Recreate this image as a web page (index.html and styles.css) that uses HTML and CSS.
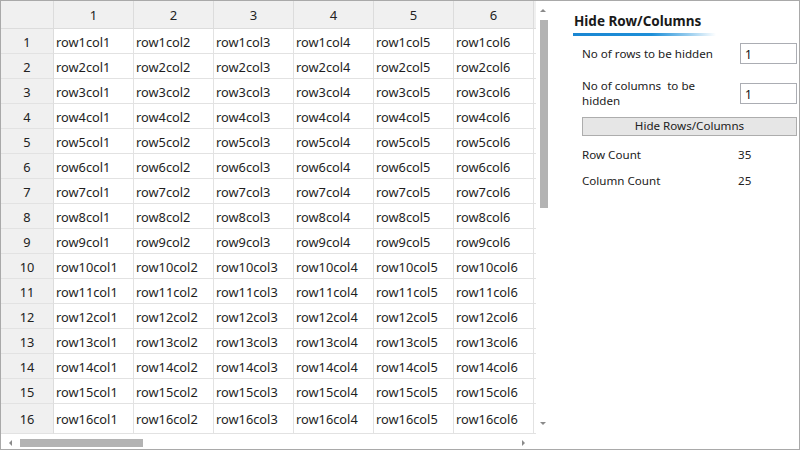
FILE: index.html
```html
<!DOCTYPE html>
<html>
<head>
<meta charset="utf-8">
<link rel="stylesheet" href="styles.css">
</head>
<body>
<div class="window">
  <div class="gridarea">
    <div class="gridmain">
      <div class="grid">
        <div class="hd corner"></div>
        <div class="hd">1</div><div class="hd">2</div><div class="hd">3</div><div class="hd">4</div><div class="hd">5</div><div class="hd">6</div><div class="hd"></div>
        <div class="rh">1</div><div class="c">row1col1</div><div class="c">row1col2</div><div class="c">row1col3</div><div class="c">row1col4</div><div class="c">row1col5</div><div class="c">row1col6</div><div class="c"></div>
        <div class="rh">2</div><div class="c">row2col1</div><div class="c">row2col2</div><div class="c">row2col3</div><div class="c">row2col4</div><div class="c">row2col5</div><div class="c">row2col6</div><div class="c"></div>
        <div class="rh">3</div><div class="c">row3col1</div><div class="c">row3col2</div><div class="c">row3col3</div><div class="c">row3col4</div><div class="c">row3col5</div><div class="c">row3col6</div><div class="c"></div>
        <div class="rh">4</div><div class="c">row4col1</div><div class="c">row4col2</div><div class="c">row4col3</div><div class="c">row4col4</div><div class="c">row4col5</div><div class="c">row4col6</div><div class="c"></div>
        <div class="rh">5</div><div class="c">row5col1</div><div class="c">row5col2</div><div class="c">row5col3</div><div class="c">row5col4</div><div class="c">row5col5</div><div class="c">row5col6</div><div class="c"></div>
        <div class="rh">6</div><div class="c">row6col1</div><div class="c">row6col2</div><div class="c">row6col3</div><div class="c">row6col4</div><div class="c">row6col5</div><div class="c">row6col6</div><div class="c"></div>
        <div class="rh">7</div><div class="c">row7col1</div><div class="c">row7col2</div><div class="c">row7col3</div><div class="c">row7col4</div><div class="c">row7col5</div><div class="c">row7col6</div><div class="c"></div>
        <div class="rh">8</div><div class="c">row8col1</div><div class="c">row8col2</div><div class="c">row8col3</div><div class="c">row8col4</div><div class="c">row8col5</div><div class="c">row8col6</div><div class="c"></div>
        <div class="rh">9</div><div class="c">row9col1</div><div class="c">row9col2</div><div class="c">row9col3</div><div class="c">row9col4</div><div class="c">row9col5</div><div class="c">row9col6</div><div class="c"></div>
        <div class="rh">10</div><div class="c">row10col1</div><div class="c">row10col2</div><div class="c">row10col3</div><div class="c">row10col4</div><div class="c">row10col5</div><div class="c">row10col6</div><div class="c"></div>
        <div class="rh">11</div><div class="c">row11col1</div><div class="c">row11col2</div><div class="c">row11col3</div><div class="c">row11col4</div><div class="c">row11col5</div><div class="c">row11col6</div><div class="c"></div>
        <div class="rh">12</div><div class="c">row12col1</div><div class="c">row12col2</div><div class="c">row12col3</div><div class="c">row12col4</div><div class="c">row12col5</div><div class="c">row12col6</div><div class="c"></div>
        <div class="rh">13</div><div class="c">row13col1</div><div class="c">row13col2</div><div class="c">row13col3</div><div class="c">row13col4</div><div class="c">row13col5</div><div class="c">row13col6</div><div class="c"></div>
        <div class="rh">14</div><div class="c">row14col1</div><div class="c">row14col2</div><div class="c">row14col3</div><div class="c">row14col4</div><div class="c">row14col5</div><div class="c">row14col6</div><div class="c"></div>
        <div class="rh">15</div><div class="c">row15col1</div><div class="c">row15col2</div><div class="c">row15col3</div><div class="c">row15col4</div><div class="c">row15col5</div><div class="c">row15col6</div><div class="c"></div>
        <div class="rh tall">16</div><div class="c tall">row16col1</div><div class="c tall">row16col2</div><div class="c tall">row16col3</div><div class="c tall">row16col4</div><div class="c tall">row16col5</div><div class="c tall">row16col6</div><div class="c tall"></div>
      </div>
      <div class="vscroll">
        <div class="arrow up"></div>
        <div class="vtrack"><div class="vthumb"></div></div>
        <div class="arrow down"></div>
      </div>
    </div>
    <div class="hscroll">
      <div class="arrow left"></div>
      <div class="htrack"><div class="hthumb"></div></div>
      <div class="arrow right"></div>
    </div>
  </div>
  <div class="panel">
    <div class="title">Hide Row/Columns</div>
    <div class="titlebar"></div>
    <div class="form">
      <div class="frow r1">
        <div class="label">No of rows to be hidden</div>
        <div class="input">1</div>
      </div>
      <div class="frow r2">
        <div class="label">No of columns&nbsp; to be<br>hidden</div>
        <div class="input">1</div>
      </div>
      <div class="button">Hide Rows/Columns</div>
      <div class="stat s1"><span class="sl">Row Count</span><span class="sv">35</span></div>
      <div class="stat s2"><span class="sl">Column Count</span><span class="sv">25</span></div>
    </div>
  </div>
</div>
</body>
</html>
```
FILE: styles.css
```css
* { box-sizing: border-box; }
html, body { margin: 0; padding: 0; background: #fff; }
body {
  font-family: "Noto Sans", "Open Sans", sans-serif;
  font-size: 12px;
  color: #1e1e1e;
}
.window {
  width: 800px;
  height: 450px;
  border: 1px solid #a9a9a9;
  display: flex;
  overflow: hidden;
}
.gridarea {
  width: 550px;
  display: flex;
  flex-direction: column;
}
.gridmain {
  display: flex;
  height: 433px;
}
.grid {
  width: 535px;
  overflow: hidden;
  display: grid;
  grid-template-columns: 53px repeat(7, 80px);
  grid-template-rows: 28px repeat(15, 25px) 30px;
  align-content: start;
  font-size: 12.8px;
}
.grid > div {
  border-right: 1px solid #e2e2e2;
  border-bottom: 1px solid #e2e2e2;
  white-space: nowrap;
  display: flex;
  align-items: center;
  padding-top: 1px;
}
.hd {
  background: #f0f0f0;
  justify-content: center;
  color: #222;
  font-size: 13px;
}
.grid > .hd { border-color: #dcdcdc; }
.rh {
  background: #f0f0f0;
  justify-content: center;
  color: #222;
}
.grid > .rh { border-right-color: #dcdcdc; }
.c { padding-left: 2px; }
.vscroll {
  width: 15px;
  display: flex;
  flex-direction: column;
  align-items: center;
}
.vtrack {
  flex: 1;
  width: 8px;
  padding-top: 7px;
}
.vthumb {
  width: 8px;
  height: 188px;
  background: #b3b3b3;
}
.arrow { width: 15px; height: 12px; position: relative; }
.arrow::after {
  content: "";
  position: absolute;
  width: 0; height: 0;
}
.arrow.up::after {
  left: 4px; top: 8px;
  border-left: 3px solid transparent;
  border-right: 3px solid transparent;
  border-bottom: 3px solid #8a8a8a;
}
.arrow.down::after {
  left: 4px; top: 0px;
  border-left: 3px solid transparent;
  border-right: 3px solid transparent;
  border-top: 3px solid #8a8a8a;
}
.hscroll {
  height: 15px;
  width: 535px;
  display: flex;
  align-items: center;
}
.hscroll .arrow { height: 15px; width: 15px; }
.arrow.left::after {
  left: 8px; top: 6px;
  border-top: 3px solid transparent;
  border-bottom: 3px solid transparent;
  border-right: 3px solid #8a8a8a;
}
.arrow.right::after {
  left: 1px; top: 6px;
  border-top: 3px solid transparent;
  border-bottom: 3px solid transparent;
  border-left: 3px solid #8a8a8a;
}
.htrack {
  flex: 1;
  height: 15px;
  padding-top: 5px;
  padding-left: 4px;
}
.hthumb {
  width: 123px;
  height: 8px;
  background: #b3b3b3;
}
.panel {
  flex: 1;
  padding: 10px 0 0 22px;
}
.title {
  font-size: 13.5px;
  font-weight: bold;
  color: #1a1a1a;
  padding-left: 1px;
  line-height: 20px;
}
.titlebar {
  margin-top: 2px;
  width: 143px;
  height: 3px;
  background: linear-gradient(to right, #1a86d2 0%, #1e8fd8 55%, rgba(40,150,220,0.5) 80%, rgba(255,255,255,0) 100%);
}
.form {
  padding-left: 9px;
  padding-right: 2px;
  font-size: 11.6px;
}
.frow {
  display: flex;
  justify-content: space-between;
  align-items: center;
}
.r1 { margin-top: 6px; height: 22px; }
.r2 { margin-top: 13px; height: 32px; }
.label { line-height: 15px; color: #222; }
.input {
  width: 57px;
  height: 21px;
  border: 1px solid #abadb3;
  padding: 2px 0 0 4px;
  color: #111;
  font-size: 12px;
}
.button {
  margin-top: 8px;
  height: 19px;
  background: #e6e6e6;
  border: 1px solid #adadad;
  text-align: center;
  line-height: 16px;
  color: #222;
}
.stat {
  display: flex;
  line-height: 16px;
  color: #222;
}
.s1 { margin-top: 11px; }
.s2 { margin-top: 10px; }
.sl { width: 156px; }
```
